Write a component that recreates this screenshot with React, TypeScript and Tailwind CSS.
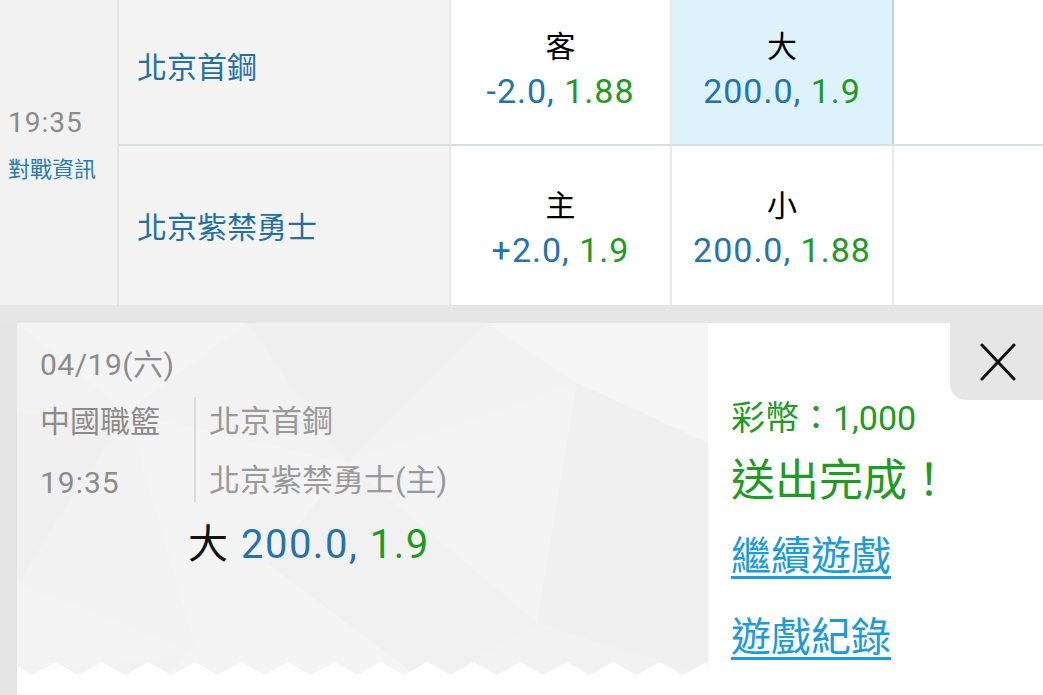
const BLUE = 'text-[#2473ae]';
const GREEN = 'text-[#1f9a23]';

function OddsCell({
  label,
  line,
  price,
  selected,
  top,
  wide,
}: {
  label: string;
  line: string;
  price: string;
  selected?: boolean;
  top: string;
  wide?: boolean;
}) {
  return (
    <div
      className={`${wide ? 'w-[222px]' : 'w-[221px]'} shrink-0 flex flex-col items-center border-r-2 ${
        selected ? 'bg-[#def2fc] border-[#bcd4e3]' : 'bg-white border-[#e6eaed]'
      } ${top}`}
    >
      <span className="text-[30px] leading-[44px] text-black">{label}</span>
      <span className="text-[34px] leading-[44px] tracking-[1px]">
        <span className={BLUE}>{line}, </span>
        <span className={GREEN}>{price}</span>
      </span>
    </div>
  );
}

function ReceiptPattern() {
  // faint low-poly background behind the receipt
  return (
    <svg className="absolute inset-0 w-full h-full" viewBox="0 0 691 353" preserveAspectRatio="none">
      <rect width="691" height="353" fill="#f2f2f2" />
      <polygon points="0,0 230,0 110,90" fill="#f4f4f4" />
      <polygon points="230,0 470,0 330,140" fill="#f0f0f0" />
      <polygon points="470,0 691,0 691,120 560,60" fill="#f5f5f5" />
      <polygon points="0,90 110,90 0,260" fill="#f0f0f0" />
      <polygon points="110,90 330,140 180,330" fill="#f4f4f4" />
      <polygon points="330,140 560,60 520,300" fill="#f3f3f3" />
      <polygon points="560,60 691,120 691,353 520,300" fill="#f0f0f0" />
      <polygon points="0,260 180,330 0,353" fill="#f3f3f3" />
      <polygon points="180,330 330,140 520,300 430,353" fill="#f1f1f1" />
      <polygon points="250,240 400,353 150,353" fill="#f4f4f4" />
    </svg>
  );
}

function Zigzag() {
  // white teeth cutting up into the bottom of the receipt
  const period = 46.5;
  let d = 'M0,40 L0,30';
  for (let x = 15; x < 691; x += period) {
    d += ` L${x},39`;
    const peak = x + period / 2;
    if (peak < 691) d += ` L${peak},26`;
  }
  d += ' L691,32 L691,40 Z';
  return (
    <svg className="absolute left-0 bottom-0 w-[691px] h-[40px]" viewBox="0 0 691 40">
      <path d={d} fill="#ffffff" />
    </svg>
  );
}

export default function App() {
  return (
    <div className="w-[1043px] h-[695px] overflow-hidden bg-white font-['Roboto','Noto_Sans_CJK_TC',sans-serif]">
      {/* match table */}
      <div className="flex h-[305px]">
        <div className="w-[119px] shrink-0 bg-[#f2f2f2] border-r-2 border-[#e3e3e3] flex flex-col pt-[103px] pl-[8px]">
          <span className="text-[28px] leading-[40px] text-[#8b8b8b] tracking-[1px]">19:35</span>
          <span className="mt-[12px] text-[22px] leading-[30px] text-[#2a7ab0]">對戰資訊</span>
        </div>
        <div className="flex-1 flex flex-col">
          <div className="h-[146px] flex border-b-2 border-[#d6e0e7]">
            <div className="w-[332px] shrink-0 bg-[#f4f4f4] border-r-2 border-[#e6e9ec] flex items-center pl-[18px] pb-[10px]">
              <span className="text-[30px] text-[#2270a6]">北京首鋼</span>
            </div>
            <OddsCell label="客" line="-2.0" price="1.88" top="pt-[25px]" />
            <OddsCell label="大" line="200.0" price="1.9" selected wide top="pt-[25px]" />
            <div className="flex-1 bg-white" />
          </div>
          <div className="flex-1 flex">
            <div className="w-[332px] shrink-0 bg-[#f4f4f4] border-r-2 border-[#e6e9ec] flex items-center pl-[18px] pt-[4px]">
              <span className="text-[30px] text-[#2270a6]">北京紫禁勇士</span>
            </div>
            <OddsCell label="主" line="+2.0" price="1.9" top="pt-[38px]" />
            <OddsCell label="小" line="200.0" price="1.88" wide top="pt-[38px]" />
            <div className="flex-1 bg-white" />
          </div>
        </div>
      </div>

      <div className="h-[18px] bg-[#e6e6e6]" />

      {/* bet receipt */}
      <div className="flex h-[372px]">
        <div className="w-[17px] shrink-0 bg-[#e5e5e5]" />
        <div className="w-[691px] shrink-0 flex flex-col">
          <div className="relative h-[353px]">
            <ReceiptPattern />
            <Zigzag />
            <div className="relative pl-[23px] pt-[22px] text-[30px] text-[#8c8c8c]">
              <div className="leading-[40px] tracking-[0.5px]">04/19(六)</div>
              <div className="mt-[12px] flex h-[105px]">
                <div className="w-[154px] shrink-0 pt-[5px]">
                  <div className="leading-[40px]">中國職籃</div>
                  <div className="mt-[21px] leading-[40px] tracking-[1px]">19:35</div>
                </div>
                <div className="border-l-2 border-[#dcdcdc] pl-[13px] pt-[5px] text-[31px]">
                  <div className="leading-[40px] text-[#9a9a9a]">北京首鋼</div>
                  <div className="mt-[19px] leading-[40px] text-[#9a9a9a]">北京紫禁勇士(主)</div>
                </div>
              </div>
              <div className="mt-[18px] ml-[148px] leading-[50px] text-[40px] tracking-[1.5px]">
                <span className="text-[#111]">大 </span>
                <span className={BLUE}>200.0, </span>
                <span className={GREEN}>1.9</span>
              </div>
            </div>
          </div>
          <div className="flex-1 bg-white" />
        </div>

        <div className="flex-1 relative bg-white pl-[23px] pt-[73px]">
          <button
            className="absolute right-0 top-0 w-[93px] h-[77px] bg-[#e6e6e6] rounded-bl-[16px] flex items-center justify-center pl-[2px]"
            aria-label="close"
          >
            <svg width="36" height="38" viewBox="0 0 36 38" fill="none" stroke="#111" strokeWidth="3" strokeLinecap="round">
              <line x1="2" y1="2" x2="34" y2="36" />
              <line x1="34" y1="2" x2="2" y2="36" />
            </svg>
          </button>
          <div className={`text-[34px] leading-[44px] ${GREEN}`}>彩幣：1,000</div>
          <div className={`mt-[13px] text-[44px] leading-[56px] ${GREEN}`}>送出完成！</div>
          <div className="mt-[23px] text-[40px] leading-[50px] text-[#1a9bdc] underline decoration-[3px] underline-offset-[6px]">
            繼續遊戲
          </div>
          <div className="mt-[31px] text-[40px] leading-[50px] text-[#1a9bdc] underline decoration-[3px] underline-offset-[6px]">
            遊戲紀錄
          </div>
        </div>
      </div>
    </div>
  );
}
